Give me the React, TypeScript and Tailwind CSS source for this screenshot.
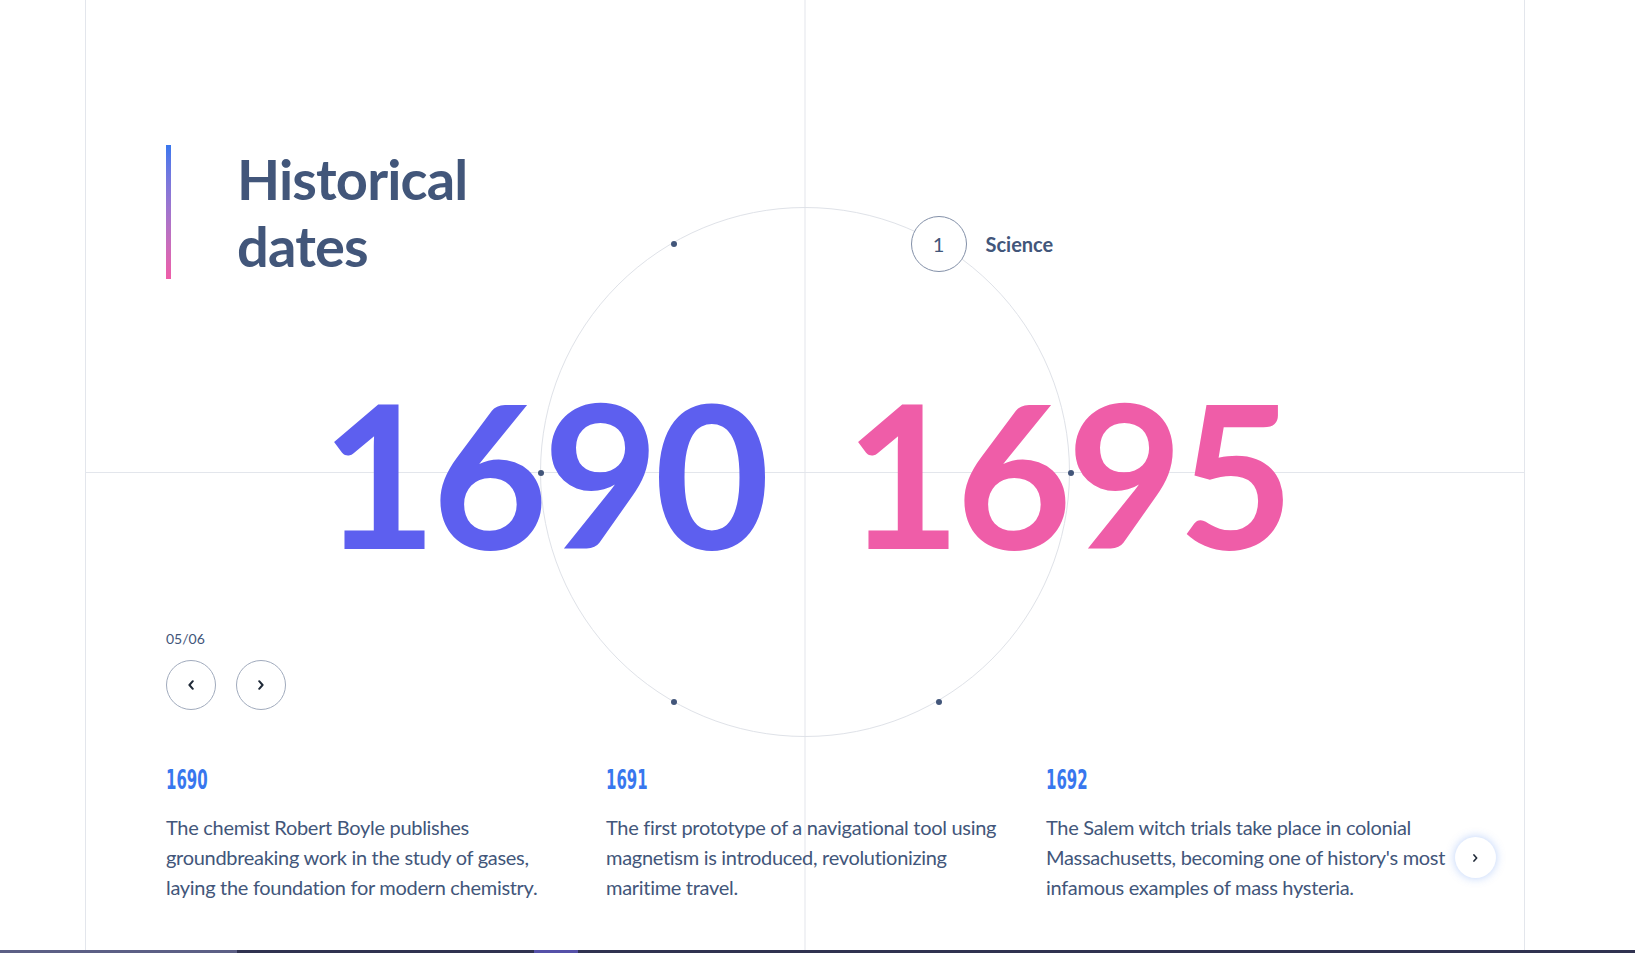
import React from "react";

const slides = [
  {
    year: "1690",
    lines: [
      "The chemist Robert Boyle publishes",
      "groundbreaking work in the study of gases,",
      "laying the foundation for modern chemistry.",
    ],
  },
  {
    year: "1691",
    lines: [
      "The first prototype of a navigational tool using",
      "magnetism is introduced, revolutionizing",
      "maritime travel.",
    ],
  },
  {
    year: "1692",
    lines: [
      "The Salem witch trials take place in colonial",
      "Massachusetts, becoming one of history's most",
      "infamous examples of mass hysteria.",
    ],
  },
];

const dotAngles = [-120, 180, 120, 60, 0];
const R = 265;

function Chevron({ dir, size = 10 }: { dir: "left" | "right"; size?: number }) {
  return (
    <svg width={size * 0.6} height={size} viewBox="0 0 6 10" fill="none">
      {dir === "left" ? (
        <path d="M4.8 1.2L1.4 5l3.4 3.8" stroke="#1f2937" strokeWidth="2" strokeLinecap="round" strokeLinejoin="round" />
      ) : (
        <path d="M1.2 1.2L4.6 5 1.2 8.8" stroke="#1f2937" strokeWidth="2" strokeLinecap="round" strokeLinejoin="round" />
      )}
    </svg>
  );
}

export default function App() {
  return (
    <div className="w-full h-[953px] bg-white flex flex-col overflow-hidden" style={{ fontFamily: "Lato, 'Noto Sans', sans-serif" }}>
      <div className="relative ml-[85px] w-[1440px] h-[950px] border-x border-[#e3e6ec] flex flex-col">
        {/* cross lines */}
        <div className="absolute left-1/2 top-0 bottom-0 w-px -translate-x-1/2 bg-[#e3e6ec]" />
        <div className="absolute left-0 right-0 top-[472px] h-px bg-[#e3e6ec]" />

        {/* circle */}
        <div className="absolute left-1/2 top-[472px] w-[530px] h-[530px] -translate-x-1/2 -translate-y-1/2 rounded-full border border-[#dfe2e8]">
          {dotAngles.map((a) => {
            const rad = (a * Math.PI) / 180;
            return (
              <div
                key={a}
                className="absolute w-[6px] h-[6px] -translate-x-1/2 -translate-y-1/2 rounded-full bg-[#42567a]"
                style={{ left: 265 + R * Math.cos(rad), top: 265 + R * Math.sin(rad) }}
              />
            );
          })}
          <div
            className="absolute -translate-y-1/2 flex items-center"
            style={{ left: 265 + R * Math.cos(-Math.PI / 3) - 28, top: 265 + R * Math.sin(-Math.PI / 3) }}
          >
            <div className="w-[56px] h-[56px] rounded-full border border-[#8390a8] bg-white flex items-center justify-center text-[20px] text-[#42567a]">
              1
            </div>
            <span className="ml-[19px] text-[20px] font-bold text-[#42567a]">Science</span>
          </div>
        </div>

        {/* big years */}
        <div className="absolute left-1/2 top-[472px] -translate-x-1/2 -translate-y-1/2 flex gap-[80px] text-[200px] leading-[160px] font-bold tracking-[-0.025em] whitespace-nowrap">
          <span className="text-[#5d5fef]">1690</span>
          <span className="text-[#ef5da8]">1695</span>
        </div>

        {/* title */}
        <div className="relative pt-[145px] pl-[80px] flex">
          <div className="w-[5px] h-[134px] bg-gradient-to-b from-[#3877ee] to-[#ef5da8]" />
          <h1 className="ml-[66px] text-[56px] leading-[67px] font-bold tracking-[-0.015em] text-[#42567a]">
            Historical
            <br />
            dates
          </h1>
        </div>

        <div className="flex-1" />

        {/* controls */}
        <div className="relative px-[80px]">
          <div className="text-[14px] leading-[18px] text-[#42567a]">05/06</div>
          <div className="mt-[12px] flex gap-[20px]">
            <button className="w-[50px] h-[50px] rounded-full border border-[#a1abbd] bg-white flex items-center justify-center">
              <Chevron dir="left" />
            </button>
            <button className="w-[50px] h-[50px] rounded-full border border-[#a1abbd] bg-white flex items-center justify-center">
              <Chevron dir="right" />
            </button>
          </div>
        </div>

        {/* slider */}
        <div className="relative mt-[55px] pl-[80px] pb-[48px] flex gap-[40px]">
          {slides.map((s) => (
            <div key={s.year} className="w-[400px] shrink-0">
              <div
                className="text-[26px] leading-[30px] font-bold text-[#3877ee] scale-x-[0.64] origin-left"
                style={{ fontFamily: "'Liberation Sans Narrow', 'DejaVu Sans Condensed', sans-serif" }}
              >
                {s.year}
              </div>
              <div className="mt-[17px] text-[20px] leading-[30px] tracking-[-0.015em] text-[#42567a] whitespace-nowrap">
                {s.lines.map((l) => (
                  <div key={l}>{l}</div>
                ))}
              </div>
            </div>
          ))}
          <button className="absolute left-[1369px] top-[72px] w-[41px] h-[41px] rounded-full bg-white shadow-[0_0_10px_rgba(56,119,238,0.35)] flex items-center justify-center">
            <Chevron dir="right" size={8} />
          </button>
        </div>
      </div>
      <div className="w-full h-[3px] bg-[#303250] flex">
        <div className="w-[237px] bg-[#5c5f85]" />
        <div className="ml-[297px] w-[44px] bg-[#5550a8]" />
      </div>
    </div>
  );
}
